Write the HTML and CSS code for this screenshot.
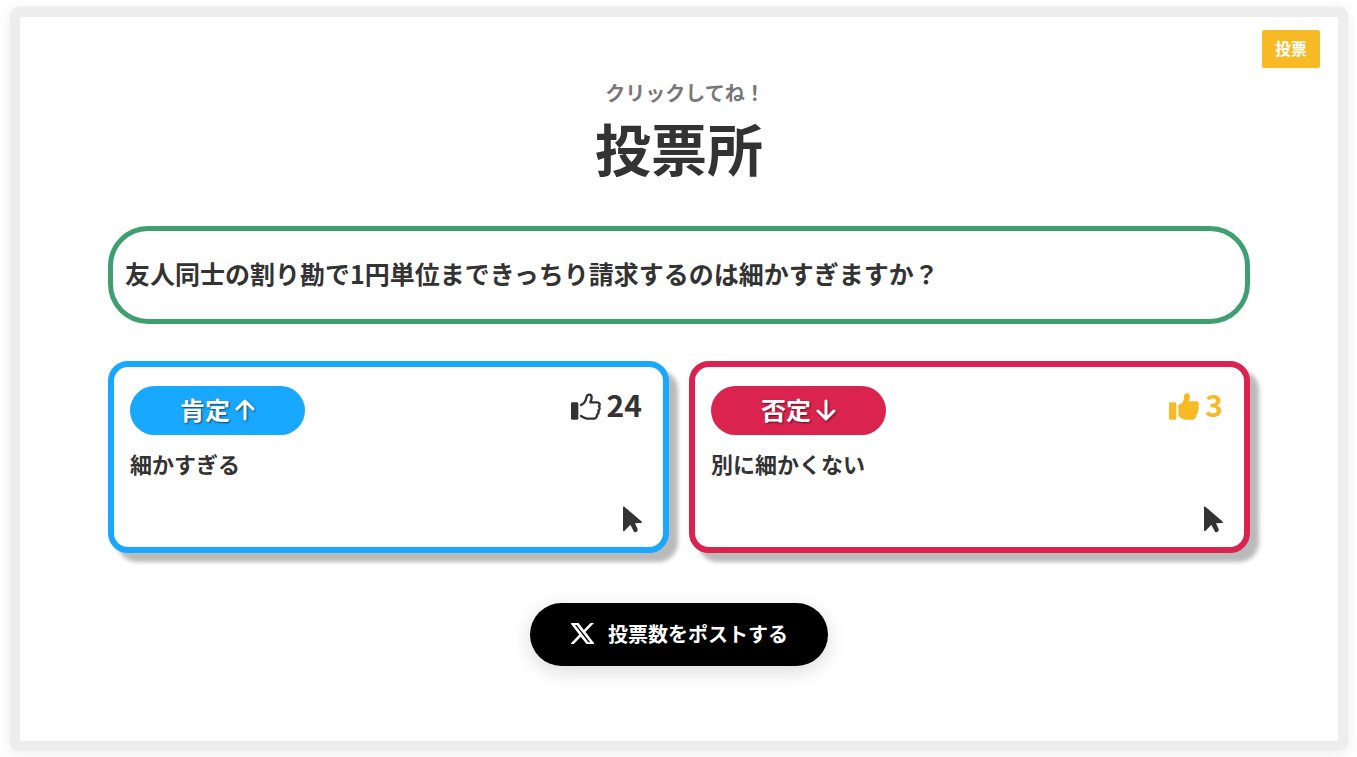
FILE: index.html
```
<!DOCTYPE html>
<html lang="ja">
<head>
  <meta charset="UTF-8">
  <meta name="viewport" content="width=device-width, initial-scale=1.0">
  <title>投票所</title>
  <link rel="stylesheet" href="styles.css">
</head>
<body>
  <main class="vote-frame">
    <a href="#vote" class="badge">投票</a>

    <!-- Heading -->
    <header class="vote-header">
      <p class="lead">クリックしてね！</p>
      <h1>投票所</h1>
    </header>

    <p class="question">友人同士の割り勘で1円単位まできっちり請求するのは細かすぎますか？</p>

    <!-- Choices -->
    <div class="choices" id="vote">
      <button type="button" class="choice choice-yes">
        <span class="choice-top">
          <span class="pill">肯定
            <svg class="arrow" viewBox="0 0 20 22" aria-hidden="true"><path d="M10 20V2M2 10L10 2l8 8"/></svg>
          </span>
          <span class="count">
            <svg class="thumb" viewBox="0 0 90 81" aria-hidden="true">
              <rect x="0" y="28" width="22" height="52" rx="4"/>
              <path class="thumb-line" d="M30 36L35 33C43 28 45 20 47 11C49 2 61 3 62 12C62 17 60 23 58 28H78C86 28 88 35 84 40C87 45 86 51 82 53C84 58 81 63 78 65C79 72 74 77 68 77H49C42 77 37 73 30 69"/>
            </svg>
            24
          </span>
        </span>
        <span class="choice-text">細かすぎる</span>
        <svg class="cursor" viewBox="0 0 57 79" aria-hidden="true"><path d="M0 3Q0-1 4 1L55 45Q59 50 53 50L36 51L44 69Q45 73 41 76Q36 80 33 76L22 55L4 74Q0 76 0 71Z"/></svg>
      </button>

      <button type="button" class="choice choice-no">
        <span class="choice-top">
          <span class="pill">否定
            <svg class="arrow" viewBox="0 0 20 22" aria-hidden="true"><path d="M10 2V20M2 12L10 20l8-8"/></svg>
          </span>
          <span class="count count-voted">
            <svg class="thumb" viewBox="0 0 90 81" aria-hidden="true">
              <rect x="0" y="28" width="22" height="52" rx="4"/>
              <path d="M28 38C28 34 34 34 38 31C46 24 43 15 46 6C49-1 58 0 61 5C65 12 61 19 59 25H82C89 25 92 32 88 39C91 44 90 50 86 53C88 58 86 63 82 65C83 73 78 80 70 80H51C42 80 37 76 31 72Q28 70 28 67Z"/>
            </svg>
            3
          </span>
        </span>
        <span class="choice-text">別に細かくない</span>
        <svg class="cursor" viewBox="0 0 57 79" aria-hidden="true"><path d="M0 3Q0-1 4 1L55 45Q59 50 53 50L36 51L44 69Q45 73 41 76Q36 80 33 76L22 55L4 74Q0 76 0 71Z"/></svg>
      </button>
    </div>

    <a href="#post" class="post-button">
      <svg class="x-logo" viewBox="0 0 1200 1227" preserveAspectRatio="none" aria-hidden="true"><path d="M714 519L1161 0H1055L667 451L357 0H0L469 682L0 1227H106L516 750L843 1227H1200L714 519ZM569 688L521 620L144 80H307L612 516L660 584L1055 1150H892L569 688Z"/></svg>
      投票数をポストする
    </a>
  </main>
</body>
</html>
```
FILE: styles.css
```
* {
  box-sizing: border-box;
}

body {
  margin: 0;
  padding: 7px 9px 6px 10px;
  background: #fff;
  color: #333;
  font-family: "Noto Sans CJK JP", sans-serif;
  font-weight: 700;
}

.vote-frame {
  position: relative;
  display: flex;
  flex-direction: column;
  padding: 60px 88px 75px;
  border: 10px solid #ededed;
  border-radius: 8px;
  box-shadow: 0 2px 14px rgba(0, 0, 0, 0.08);
}

.badge {
  position: absolute;
  top: 13px;
  right: 18px;
  padding: 6px 13px 8px;
  border-radius: 2px;
  background: #f7b924;
  color: #fff;
  font-size: 16px;
  line-height: 24px;
  text-decoration: none;
}

/* Heading */
.vote-header {
  text-align: center;
}

.lead {
  margin: 0;
  padding-left: 12px;
  color: #777;
  font-size: 20px;
  line-height: 32px;
}

h1 {
  margin: 0;
  font-size: 56px;
  line-height: 76px;
}

.question {
  margin: 41px 0 37px;
  padding: 22px 12px 26px;
  border: 5px solid #3f9f70;
  border-radius: 40px;
  font-size: 25px;
  line-height: 40px;
}

/* Choices */
.choices {
  display: grid;
  grid-template-columns: 1fr 1fr;
  gap: 20px;
}

.choice {
  display: flex;
  flex-direction: column;
  padding: 19px 21px 14px 16px;
  border: 6px solid;
  border-radius: 20px;
  background: #fff;
  box-shadow: 9px 9px 4px rgba(0, 0, 0, 0.27);
  color: #333;
  font: inherit;
  text-align: left;
  cursor: pointer;
}

.choice-yes {
  border-color: #18a8ff;
}

.choice-no {
  border-color: #da244f;
}

.choice-top {
  display: flex;
  justify-content: space-between;
  align-self: stretch;
}

.pill {
  display: flex;
  align-items: center;
  justify-content: center;
  gap: 5px;
  width: 175px;
  height: 49px;
  padding-bottom: 3px;
  border-radius: 25px;
  color: #fff;
  font-size: 25px;
  line-height: 36px;
  text-shadow: 1px 1px 2px rgba(0, 0, 0, 0.6);
}

.choice-yes .pill {
  background: #18a8ff;
}

.choice-no .pill {
  background: #da244f;
}

.arrow {
  width: 20px;
  height: 22px;
  margin-top: 2px;
  fill: none;
  stroke: currentColor;
  stroke-width: 3;
  stroke-linecap: round;
  stroke-linejoin: round;
  filter: drop-shadow(1px 1px 1px rgba(0, 0, 0, 0.5));
}

.count {
  display: flex;
  align-items: center;
  gap: 6px;
  height: 36px;
  font-size: 30px;
}

.count-voted {
  color: #f7b924;
}

.thumb {
  width: 30px;
  height: 27px;
  margin-top: 4px;
  fill: currentColor;
}

.thumb-line {
  fill: none;
  stroke: currentColor;
  stroke-width: 7;
  stroke-linecap: round;
  stroke-linejoin: round;
}

.choice-text {
  margin: 12px 0 26px;
  font-size: 22px;
  line-height: 33px;
}

.cursor {
  align-self: flex-end;
  width: 19px;
  height: 27px;
  fill: currentColor;
}

/* Post button */
.post-button {
  display: flex;
  align-items: center;
  align-self: center;
  gap: 14px;
  margin-top: 50px;
  padding: 15px 40px 17px 41px;
  border-radius: 32px;
  background: #000;
  box-shadow: 0 5px 20px rgba(0, 0, 0, 0.15);
  color: #fff;
  font-size: 20px;
  line-height: 31px;
  text-decoration: none;
}

.x-logo {
  width: 23px;
  height: 21px;
  fill: currentColor;
  stroke: currentColor;
  stroke-width: 60;
}
```
